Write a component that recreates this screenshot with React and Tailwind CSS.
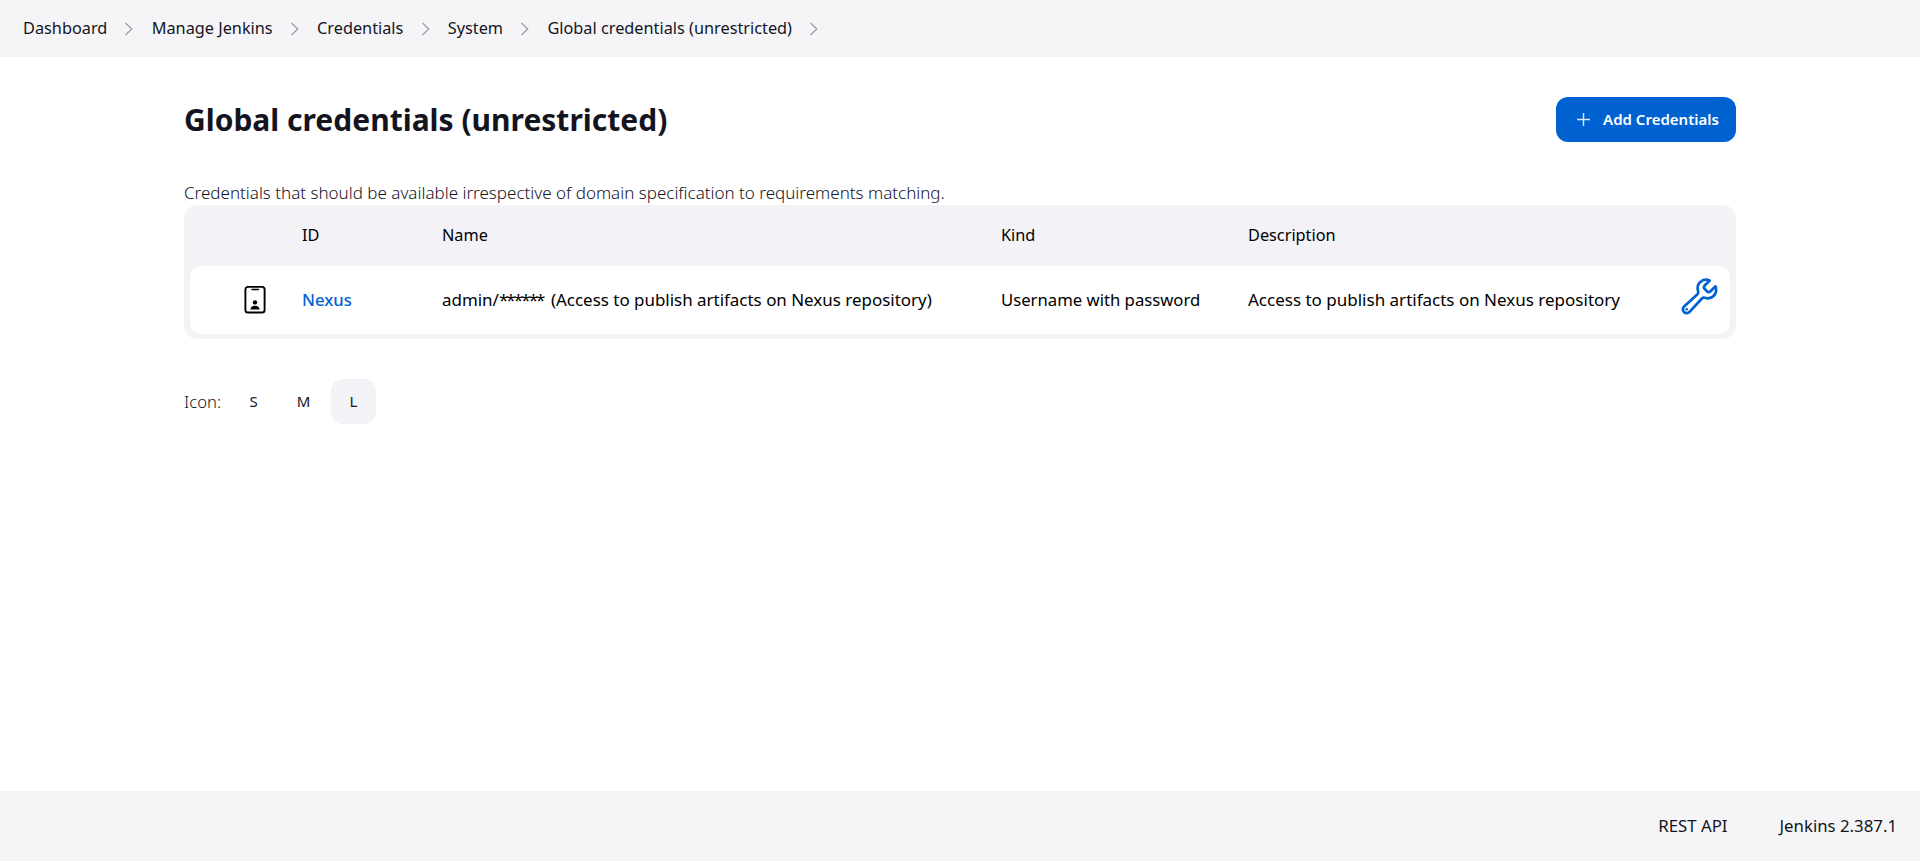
import React from "react";

function Chevron() {
  return (
    <svg width="12" height="16" viewBox="0 0 12 16" fill="none" className="mx-[16.2px] shrink-0">
      <path d="M2.5 2 L8.8 8 L2.5 14" stroke="#9a9aa6" strokeWidth="1.2" />
    </svg>
  );
}

function Crumb({ children }) {
  return <span className="text-[16.3px] text-[#14141f]">{children}</span>;
}

function IdCard() {
  return (
    <svg width="24" height="30" viewBox="0 0 24 30" fill="none">
      <rect x="2.4" y="1.9" width="19.2" height="25.6" rx="2.6" stroke="#000" strokeWidth="1.9" />
      <path d="M9 4.5h6.5" stroke="#000" strokeWidth="1.5" strokeLinecap="round" />
      <circle cx="12" cy="17.4" r="2.2" fill="#000" />
      <path d="M7.4 24.6c0-2.6 2-3.9 4.6-3.9s4.6 1.3 4.6 3.9z" fill="#000" />
    </svg>
  );
}

function Wrench() {
  return (
    <svg width="41" height="41" viewBox="0 0 512 512" fill="none">
      <path
        d="M393.87 190a32.1 32.1 0 01-45.25 0l-26.57-26.57a32.09 32.09 0 010-45.26L382.19 58a1 1 0 00-.3-1.64c-38.82-16.64-89.15-8.16-121.11 23.57-30.59 30.35-32.32 76-21.12 115.84a31.93 31.93 0 01-9.06 32.08L64 380a48.17 48.17 0 1068 68l153.86-167a31.93 31.93 0 0131.6-9.13c39.54 10.59 84.54 8.6 114.72-21.19 32.49-32 39.5-88.56 23.75-120.93a1 1 0 00-1.6-.26z"
        stroke="#0062d1"
        strokeWidth="34"
        strokeMiterlimit="10"
        strokeLinecap="round"
      />
      <circle cx="96" cy="416" r="16" fill="#0062d1" />
    </svg>
  );
}

export default function App() {
  return (
    <div className="flex min-h-[861px] flex-col bg-white text-[#14141f] font-['Noto_Sans','Open_Sans',sans-serif]">
      <header className="flex h-[57px] items-center bg-[#f5f5f7] pl-[23px]">
        <Crumb>Dashboard</Crumb>
        <Chevron />
        <Crumb>Manage Jenkins</Crumb>
        <Chevron />
        <Crumb>Credentials</Crumb>
        <Chevron />
        <Crumb>System</Crumb>
        <Chevron />
        <Crumb>Global credentials (unrestricted)</Crumb>
        <Chevron />
      </header>

      <main className="flex-1 pl-[184px] pr-[184px]">
        <div className="mt-[40px] flex h-[45px] items-center justify-between">
          <h1 className="text-[30px] font-bold leading-[45px] text-[#14141f]">
            Global credentials (unrestricted)
          </h1>
          <button className="flex h-[45px] w-[180px] items-center justify-center gap-[11px] rounded-[12px] bg-[#0062d1] pl-[2px] text-[15px] font-semibold text-white">
            <svg width="17" height="17" viewBox="0 0 17 17" fill="none">
              <path d="M8.5 2v13M2 8.5h13" stroke="#dbe7f8" strokeWidth="1.4" />
            </svg>
            Add Credentials
          </button>
        </div>

        <p className="mt-[39px] h-[24px] text-[17px] font-light leading-[23px] text-[#14141f]">
          Credentials that should be available irrespective of domain specification to requirements matching.
        </p>

        <div className="rounded-[14px] bg-[#f2f2f7] px-[6px] pb-[5px] text-[16.7px] text-[#000]">
          <div className="flex h-[61px] items-center text-[16.3px]">
            <div className="w-[112px]" />
            <div className="w-[140px]">ID</div>
            <div className="w-[559px]">Name</div>
            <div className="w-[247px]">Kind</div>
            <div>Description</div>
          </div>
          <div className="flex h-[68px] items-center rounded-[10px] bg-white">
            <div className="w-[112px] pl-[53px]">
              <IdCard />
            </div>
            <div className="w-[140px] font-medium text-[#0062d1]">Nexus</div>
            <div className="w-[559px] text-[16.95px]">
              admin/<span className="mr-[3px] tracking-[-1.9px]">******</span> (Access to publish artifacts on Nexus repository)
            </div>
            <div className="w-[247px]">Username with password</div>
            <div className="flex-1 text-[17px]">Access to publish artifacts on Nexus repository</div>
            <div className="mr-[10px] mb-[8px] flex">
              <Wrench />
            </div>
          </div>
        </div>

        <div className="mt-[40px] flex items-center text-[15px]">
          <span className="mr-[10px] text-[16.7px] font-light">Icon:</span>
          <span className="flex h-[45px] w-[45px] items-center justify-center rounded-[12px]">S</span>
          <span className="mx-[5px] flex h-[45px] w-[45px] items-center justify-center rounded-[12px]">M</span>
          <span className="flex h-[45px] w-[45px] items-center justify-center rounded-[12px] bg-[#f2f2f7]">L</span>
        </div>
      </main>

      <footer className="flex h-[70px] items-center justify-end bg-[#f5f5f7] pr-[23px] text-[16.8px] text-[#14141f]">
        <span>REST API</span>
        <span className="ml-[52px]">Jenkins 2.387.1</span>
      </footer>
    </div>
  );
}
